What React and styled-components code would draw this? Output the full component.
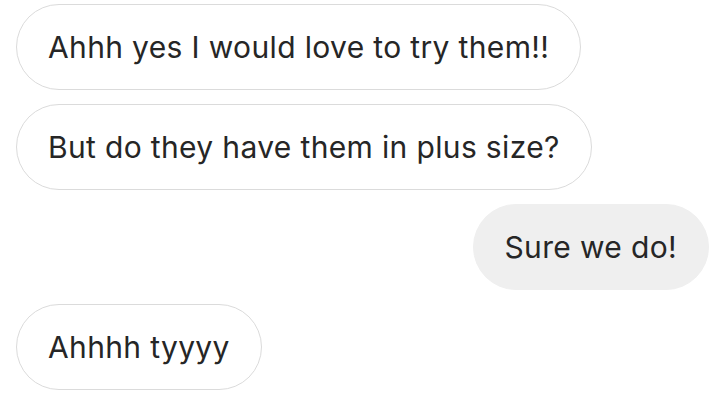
import React from "react";
import styled, { createGlobalStyle } from "styled-components";

const GlobalStyle = createGlobalStyle`
  html, body {
    margin: 0;
    padding: 0;
    background: #ffffff;
  }
  body {
    font-family: Inter, "Liberation Sans", Arial, sans-serif;
  }
`;

const Thread = styled.div`
  display: flex;
  flex-direction: column;
  gap: 14px;
  padding: 4px 5px 0 16px;
  width: 714px;
  box-sizing: border-box;
`;

const Row = styled.div`
  display: flex;
  justify-content: ${(p) => (p.$mine ? "flex-end" : "flex-start")};
`;

const Bubble = styled.div`
  box-sizing: border-box;
  height: 86px;
  display: flex;
  align-items: center;
  padding: 0 31px 0 31px;
  border-radius: 43px;
  font-size: 30px;
  letter-spacing: 0.35px;
  color: #262626;
  white-space: nowrap;
  background: ${(p) => (p.$mine ? "#efefef" : "#ffffff")};
  border: 1.5px solid ${(p) => (p.$mine ? "#efefef" : "#dbdbdb")};
`;

const messages = [
  { text: "Ahhh yes I would love to try them!!" },
  { text: "But do they have them in plus size?" },
  { text: "Sure we do!", mine: true },
  { text: "Ahhhh tyyyy" },
];

export default function App() {
  return (
    <>
      <GlobalStyle />
      <Thread>
        {messages.map((m, i) => (
          <Row key={i} $mine={m.mine}>
            <Bubble $mine={m.mine}>{m.text}</Bubble>
          </Row>
        ))}
      </Thread>
    </>
  );
}
